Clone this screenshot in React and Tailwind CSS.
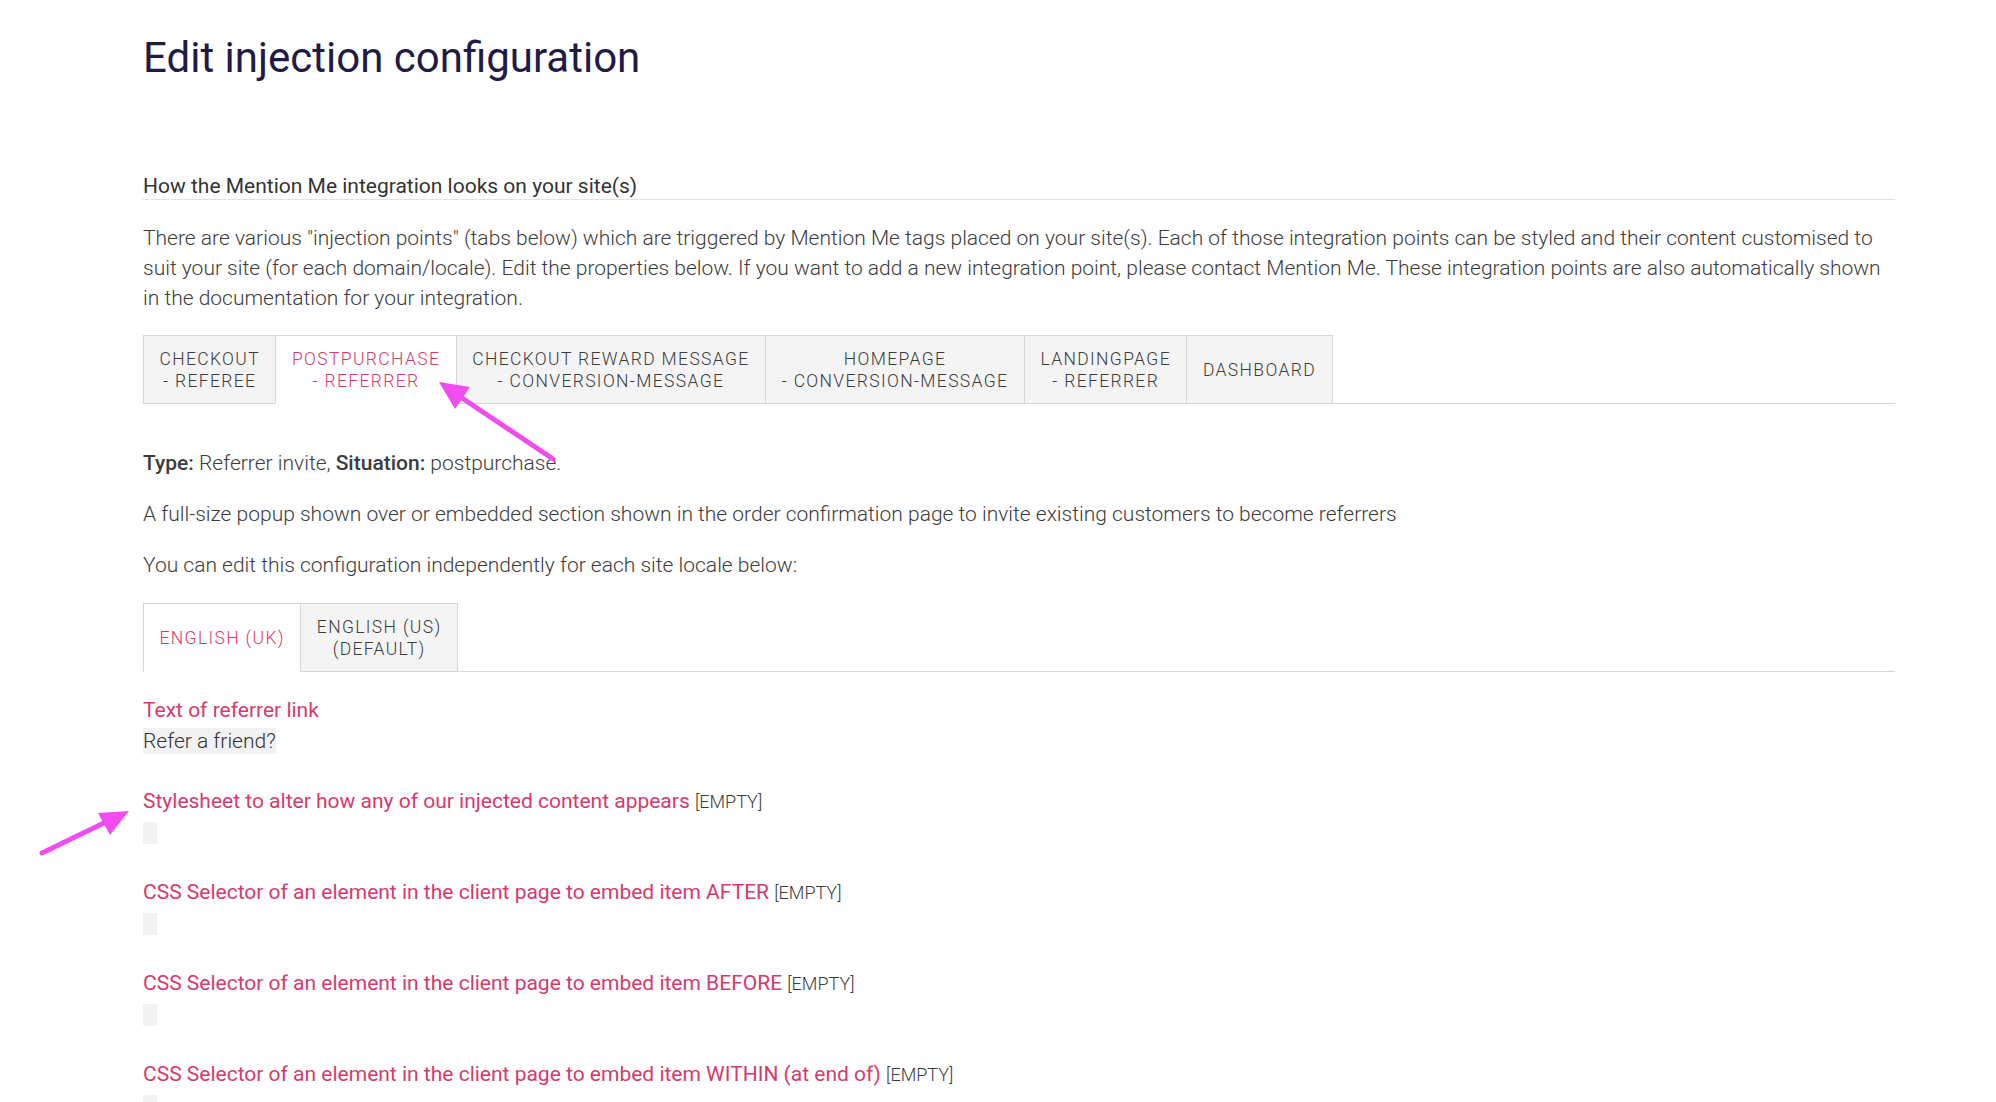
import React from "react";

const topTabs = [
  { l1: "CHECKOUT", l2: "- REFEREE" },
  { l1: "POSTPURCHASE", l2: "- REFERRER", active: true },
  { l1: "CHECKOUT REWARD MESSAGE", l2: "- CONVERSION-MESSAGE" },
  { l1: "HOMEPAGE", l2: "- CONVERSION-MESSAGE" },
  { l1: "LANDINGPAGE", l2: "- REFERRER" },
  { l1: "DASHBOARD" },
];

const localeTabs = [
  { l1: "ENGLISH (UK)", active: true },
  { l1: "ENGLISH (US)", l2: "(DEFAULT)" },
];

function Tabs({ tabs }) {
  return (
    <div className="flex border-b border-[#d6d6d6]">
      {tabs.map((t, i) => (
        <div
          key={i}
          className={
            "flex flex-col items-center justify-center text-center px-[15.5px] pt-[12px] pb-[11px] border-t border-l border-[#d6d6d6] -mb-px text-[17.5px] leading-[22px] tracking-[1.35px] font-light " +
            (t.active
              ? "bg-white text-[#d63a6c] border-b border-b-white"
              : "bg-[#f4f4f4] text-[#3c3c3c] border-b border-b-[#d6d6d6]") +
            (i === tabs.length - 1 ? " border-r" : "")
          }
        >
          <span>{t.l1}</span>
          {t.l2 && <span>{t.l2}</span>}
        </div>
      ))}
    </div>
  );
}

function Field({ label }) {
  return (
    <div className="mb-[33px]">
      <div className="h-[30px] text-[21px] leading-[30px] whitespace-nowrap">
        <span className="text-[#d63a6c]">{label}</span>{" "}
        <span className="text-[18px] leading-none font-light text-[#3c3c3c]">[EMPTY]</span>
      </div>
      <div className="mt-[6px] w-[14px] h-[22px] bg-[#f2f2f2]" />
    </div>
  );
}

export default function App() {
  return (
    <div className="relative w-full h-[1102px] overflow-hidden bg-white font-['Roboto',sans-serif] text-[#3c3c3c]">
      <div className="ml-[143px] w-[1752px] pt-[33px]">
        <h1 className="text-[42px] leading-[50px] font-normal text-[#1f1b46]">
          Edit injection configuration
        </h1>

        <div className="mt-[90px] text-[21px] leading-[26px] text-[#333] border-b border-[#e2e2e2]">
          How the Mention Me integration looks on your site(s)
        </div>

        <p className="mt-[23px] text-[21px] leading-[30px] font-light text-[#3c3c3c]">
          There are various "injection points" (tabs below) which are triggered by Mention Me tags placed on your site(s). Each of those integration points can be styled and their content customised to suit your site (for each domain/locale). Edit the properties below. If you want to add a new integration point, please contact Mention Me. These integration points are also automatically shown in the documentation for your integration.
        </p>

        <div className="mt-[22px]">
          <Tabs tabs={topTabs} />
        </div>

        <div className="mt-[44px] text-[21px] leading-[30px] font-light">
          <p>
            <span className="font-medium">Type:</span> Referrer invite,{" "}
            <span className="font-medium">Situation:</span> postpurchase.
          </p>
          <p className="mt-[21px]">
            A full-size popup shown over or embedded section shown in the order confirmation page to invite existing customers to become referrers
          </p>
          <p className="mt-[21px]">
            You can edit this configuration independently for each site locale below:
          </p>
        </div>

        <div className="mt-[23px]">
          <Tabs tabs={localeTabs} />
        </div>

        <div className="mt-[23px]">
          <div className="text-[21px] leading-[30px] text-[#d63a6c]">Text of referrer link</div>
          <div className="mt-[3px] inline-block bg-[#f2f2f2] text-[21px] leading-[26px] font-light text-[#333]">
            Refer a friend?
          </div>
        </div>

        <div className="mt-[31px]">
          <Field label="Stylesheet to alter how any of our injected content appears" />
          <Field label="CSS Selector of an element in the client page to embed item AFTER" />
          <Field label="CSS Selector of an element in the client page to embed item BEFORE" />
          <Field label="CSS Selector of an element in the client page to embed item WITHIN (at end of)" />
        </div>
      </div>

      <svg
        className="absolute inset-0 pointer-events-none"
        width="1996"
        height="1102"
        viewBox="0 0 1996 1102"
      >
        <line x1="553" y1="459" x2="462" y2="398" stroke="#f04cf2" strokeWidth="5" strokeLinecap="round" />
        <polygon points="439,382 470,387 455,409" fill="#f04cf2" />
        <line x1="42" y1="853" x2="106" y2="822" stroke="#f04cf2" strokeWidth="5" strokeLinecap="round" />
        <polygon points="129,811 110,835 98,813" fill="#f04cf2" />
      </svg>
    </div>
  );
}
